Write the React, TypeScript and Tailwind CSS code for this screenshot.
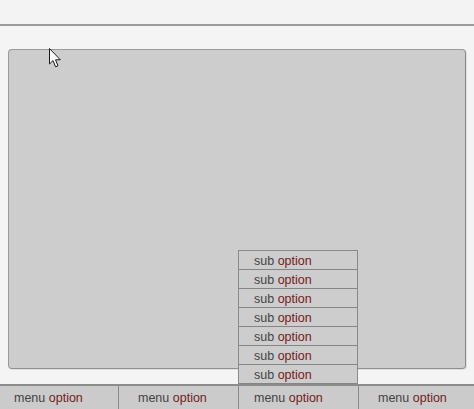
import React from 'react';

const font = { fontFamily: '"Liberation Sans", Arial, sans-serif' };

const subItems = Array.from({ length: 7 }, (_, i) => i);

const Label: React.FC<{ first: string }> = ({ first }) => (
  <span className="text-[12.5px] leading-none whitespace-nowrap">
    <span className="text-[#444444]">{first} </span>
    <span className="text-[#742020]">option</span>
  </span>
);

const Cursor = () => (
  <svg
    className="absolute left-[48px] top-[47px] pointer-events-none"
    width="14"
    height="22"
    viewBox="0 0 14 22"
  >
    <path
      d="M1.5 1.5 L1.5 17 L5 13.6 L7.6 19.8 L10 18.8 L7.5 12.8 L12.3 12.8 Z"
      fill="#ffffff"
      stroke="#1a1a1a"
      strokeWidth="1"
      strokeLinejoin="round"
    />
  </svg>
);

export default function App() {
  return (
    <div className="relative w-[474px] h-[409px] bg-[#f4f4f4] flex flex-col overflow-hidden" style={font}>
      <div className="h-[26px] shrink-0 bg-[#f3f3f3] border-b-2 border-[#9b9b9b]" />

      <div className="pt-[23px] px-[8px] shrink-0">
        <div className="h-[320px] rounded-[4px] bg-[#cdcdcd] border border-[#9a9a9a] border-r-[#8a8a8a] border-b-[#8f8f8f] shadow-[1px_1px_0_#e0e0e0]" />
      </div>

      <div className="flex-1" />

      <div className="h-[25px] shrink-0 flex bg-[#cbcbcb] border-t-2 border-[#8c8c8c]">
        <div className="w-[119px] border-r border-[#8a8a8a] flex items-center pl-[14px] pt-[1px]">
          <Label first="menu" />
        </div>
        <div className="w-[120px] border-r border-[#8a8a8a] flex items-center pl-[19px] pt-[1px]">
          <Label first="menu" />
        </div>
        <div className="relative w-[120px] border-r border-[#8a8a8a] flex items-center pl-[15px] pt-[1px]">
          <div className="absolute left-[-1px] bottom-[calc(100%+2px)] w-[120px] bg-[#cdcdcd] border-t border-l border-r border-[#8a8a8a] flex flex-col">
            {subItems.map((i) => (
              <div key={i} className="h-[19px] border-b border-[#858585] flex items-center pl-[15px] pt-[2px]">
                <Label first="sub" />
              </div>
            ))}
          </div>
          <Label first="menu" />
        </div>
        <div className="flex-1 flex items-center pl-[19px] pt-[1px]">
          <Label first="menu" />
        </div>
      </div>

      <Cursor />
    </div>
  );
}
